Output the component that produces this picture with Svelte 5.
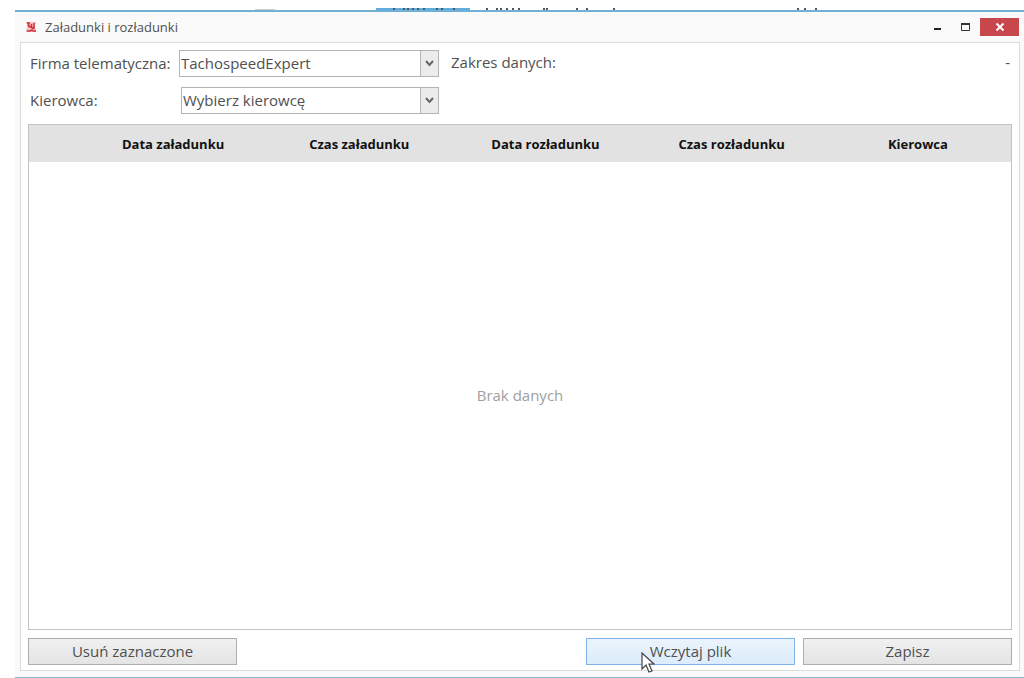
<script>
  const companies = ["TachospeedExpert"];
  const drivers = ["Wybierz kierowcę"];
  const columns = [
    "Data załadunku",
    "Czas załadunku",
    "Data rozładunku",
    "Czas rozładunku",
    "Kierowca",
  ];

  // tips of the clipped toolbar labels behind the dialog
  const marks = [
    393, 403, 407, 412, 417, 423, 436, 441, 453, 486, 496, 500, 506, 512, 518,
    543, 546, 576, 586, 613, 797, 804, 815,
  ];

  let company = $state(companies[0]);
  let driver = $state(drivers[0]);
</script>

<div class="desktop">
  <svg class="behind" width="1024" height="10" aria-hidden="true">
    <path d="M255 9.5h20" stroke="#ccc" />
    <path d="M376 9h94" stroke="#5faedd" stroke-width="2" />
    {#each marks as x}
      <rect {x} y="8" width="2" height="2" fill="#4b5963" />
    {/each}
  </svg>

  <main class="window">
    <header>
      <svg class="logo" width="11" height="12" viewBox="0 0 11 12" aria-hidden="true">
        <path d="M0 1h10v2H9v5h1v3H0V8h1V3H0z" fill="#f5bfc2" />
        <path
          d="M1 2h3M2.500 2.500v2.500l5 2.500M5.500 3v3M8 2v6M1 10h3l2-1 1 1h3"
          fill="none"
          stroke="#d3303b"
          stroke-width="1.500"
        />
      </svg>
      <h1>Załadunki i rozładunki</h1>
      <div class="controls">
        <button aria-label="Minimalizuj">
          <svg width="11" height="10"><path d="M2 7h7" stroke="#222" stroke-width="2" /></svg>
        </button>
        <button aria-label="Maksymalizuj">
          <svg width="11" height="10">
            <path d="M1.500 2v6.500h8V2" fill="none" stroke="#333" />
            <path d="M1 2h9" stroke="#333" stroke-width="2" />
          </svg>
        </button>
        <button class="close" aria-label="Zamknij">
          <svg width="10" height="10">
            <path d="M1.500 1.500l7 7M8.500 1.500l-7 7" stroke="#fff" stroke-width="2" />
          </svg>
        </button>
      </div>
    </header>

    <section class="panel">
      <div class="filters">
        <label for="company">Firma telematyczna:</label>
        <div class="combo">
          <select id="company" bind:value={company}>
            {#each companies as item}
              <option>{item}</option>
            {/each}
          </select>
          <span class="arrow">
            <svg width="9" height="7"><path d="M1 1l3.500 4L8 1" /></svg>
          </span>
        </div>
        <p class="range"><span>Zakres danych:</span><span>-</span></p>

        <label for="driver">Kierowca:</label>
        <div class="combo narrow">
          <select id="driver" bind:value={driver}>
            {#each drivers as item}
              <option>{item}</option>
            {/each}
          </select>
          <span class="arrow">
            <svg width="9" height="7"><path d="M1 1l3.500 4L8 1" /></svg>
          </span>
        </div>
      </div>

      <div class="grid">
        <table>
          <thead>
            <tr>
              <th class="select"></th>
              {#each columns as column}
                <th>{column}</th>
              {/each}
            </tr>
          </thead>
        </table>
        <p class="empty">Brak danych</p>
      </div>

      <footer>
        <button class="action">Usuń zaznaczone</button>
        <button class="action active">
          Wczytaj plik
          <svg class="cursor" width="14" height="22" viewBox="0 0 14 22" aria-hidden="true">
            <path
              d="M1 1v16l4-4 3 7 3-1-3-7h5z"
              fill="#fff"
              stroke="#444"
              stroke-width="1.200"
            />
          </svg>
        </button>
        <button class="action">Zapisz</button>
      </footer>
    </section>
  </main>
</div>

<style>
  :global(body) {
    margin: 0;
    background: #fff;
  }
  .desktop {
    display: flex;
    flex-direction: column;
    box-sizing: border-box;
    min-height: 100vh;
    padding-left: 15px;
    overflow: hidden;
    font-family: "Open Sans", "Noto Sans", sans-serif;
    font-size: 15px;
    line-height: 20px;
    color: #505050;
  }
  .behind {
    flex: none;
    margin-left: -15px;
  }
  .window {
    display: flex;
    flex: 1;
    flex-direction: column;
    padding: 0 4px 6px 5px;
    border-top: 2px solid #70afd6;
    border-bottom: 1px solid #83bacb;
    background: #fafafa;
  }
  header {
    display: flex;
    align-items: center;
    height: 30px;
    padding-left: 6px;
  }
  h1 {
    flex: 1;
    margin: 0 0 0 8px;
    font-size: 13px;
    font-weight: 400;
  }
  .controls {
    display: flex;
    height: 18px;
  }
  .controls button {
    display: flex;
    align-items: center;
    justify-content: center;
    width: 28px;
    padding: 0;
    border: 0;
    background: none;
  }
  .controls .close {
    width: 39px;
    margin: 0 1px;
    background: #c8474d;
  }
  .panel {
    display: flex;
    flex: 1;
    flex-direction: column;
    padding: 7px 7px 5px;
    border: 1px solid #dcdcdc;
    background: #fff;
  }
  .filters {
    display: grid;
    grid-template-columns: 151px 260px 1fr;
    row-gap: 10px;
    align-items: center;
  }
  label {
    padding: 0 0 2px 2px;
  }
  .combo {
    display: flex;
    position: relative;
  }
  .narrow {
    margin-left: 2px;
  }
  select {
    flex: 1;
    box-sizing: border-box;
    height: 27px;
    margin: 0;
    padding: 0 20px 1px 1px;
    appearance: none;
    border: 1px solid #b4b4b4;
    border-radius: 0;
    background: #fff;
    color: inherit;
    font: inherit;
  }
  .arrow {
    display: flex;
    align-items: center;
    justify-content: center;
    position: absolute;
    inset: 1px 1px 1px auto;
    width: 17px;
    border-left: 1px solid #b4b4b4;
    background: #ececec;
    pointer-events: none;
  }
  .arrow path {
    fill: none;
    stroke: #666;
    stroke-width: 2;
  }
  .range {
    display: flex;
    justify-content: space-between;
    margin: 0;
    padding: 0 2px 3px 12px;
  }
  .grid {
    display: flex;
    flex: 1;
    flex-direction: column;
    margin: 10px 0 8px;
    border: 1px solid #c3c3c3;
  }
  table {
    width: 100%;
    table-layout: fixed;
    border-collapse: collapse;
  }
  th {
    height: 37px;
    padding: 0;
    background: #e2e2e2;
    color: #111;
    font-size: 13px;
    font-weight: 700;
  }
  .select {
    width: 51px;
  }
  .empty {
    display: flex;
    flex: 1;
    align-items: center;
    justify-content: center;
    margin: 0;
    padding-bottom: 2px;
    color: #a0a0a0;
  }
  footer {
    display: flex;
    gap: 8px;
  }
  .action {
    position: relative;
    box-sizing: border-box;
    width: 209px;
    height: 27px;
    padding: 0 0 2px;
    border: 1px solid #adadad;
    background: linear-gradient(#f0f0f0, #e4e4e4);
    color: inherit;
    font: inherit;
  }
  .action:first-child {
    margin-right: auto;
  }
  .active {
    border-color: #7eb4ea;
    background: linear-gradient(#ebf4fc, #dcecfb);
  }
  .cursor {
    position: absolute;
    top: 13px;
    left: 54px;
  }
</style>
